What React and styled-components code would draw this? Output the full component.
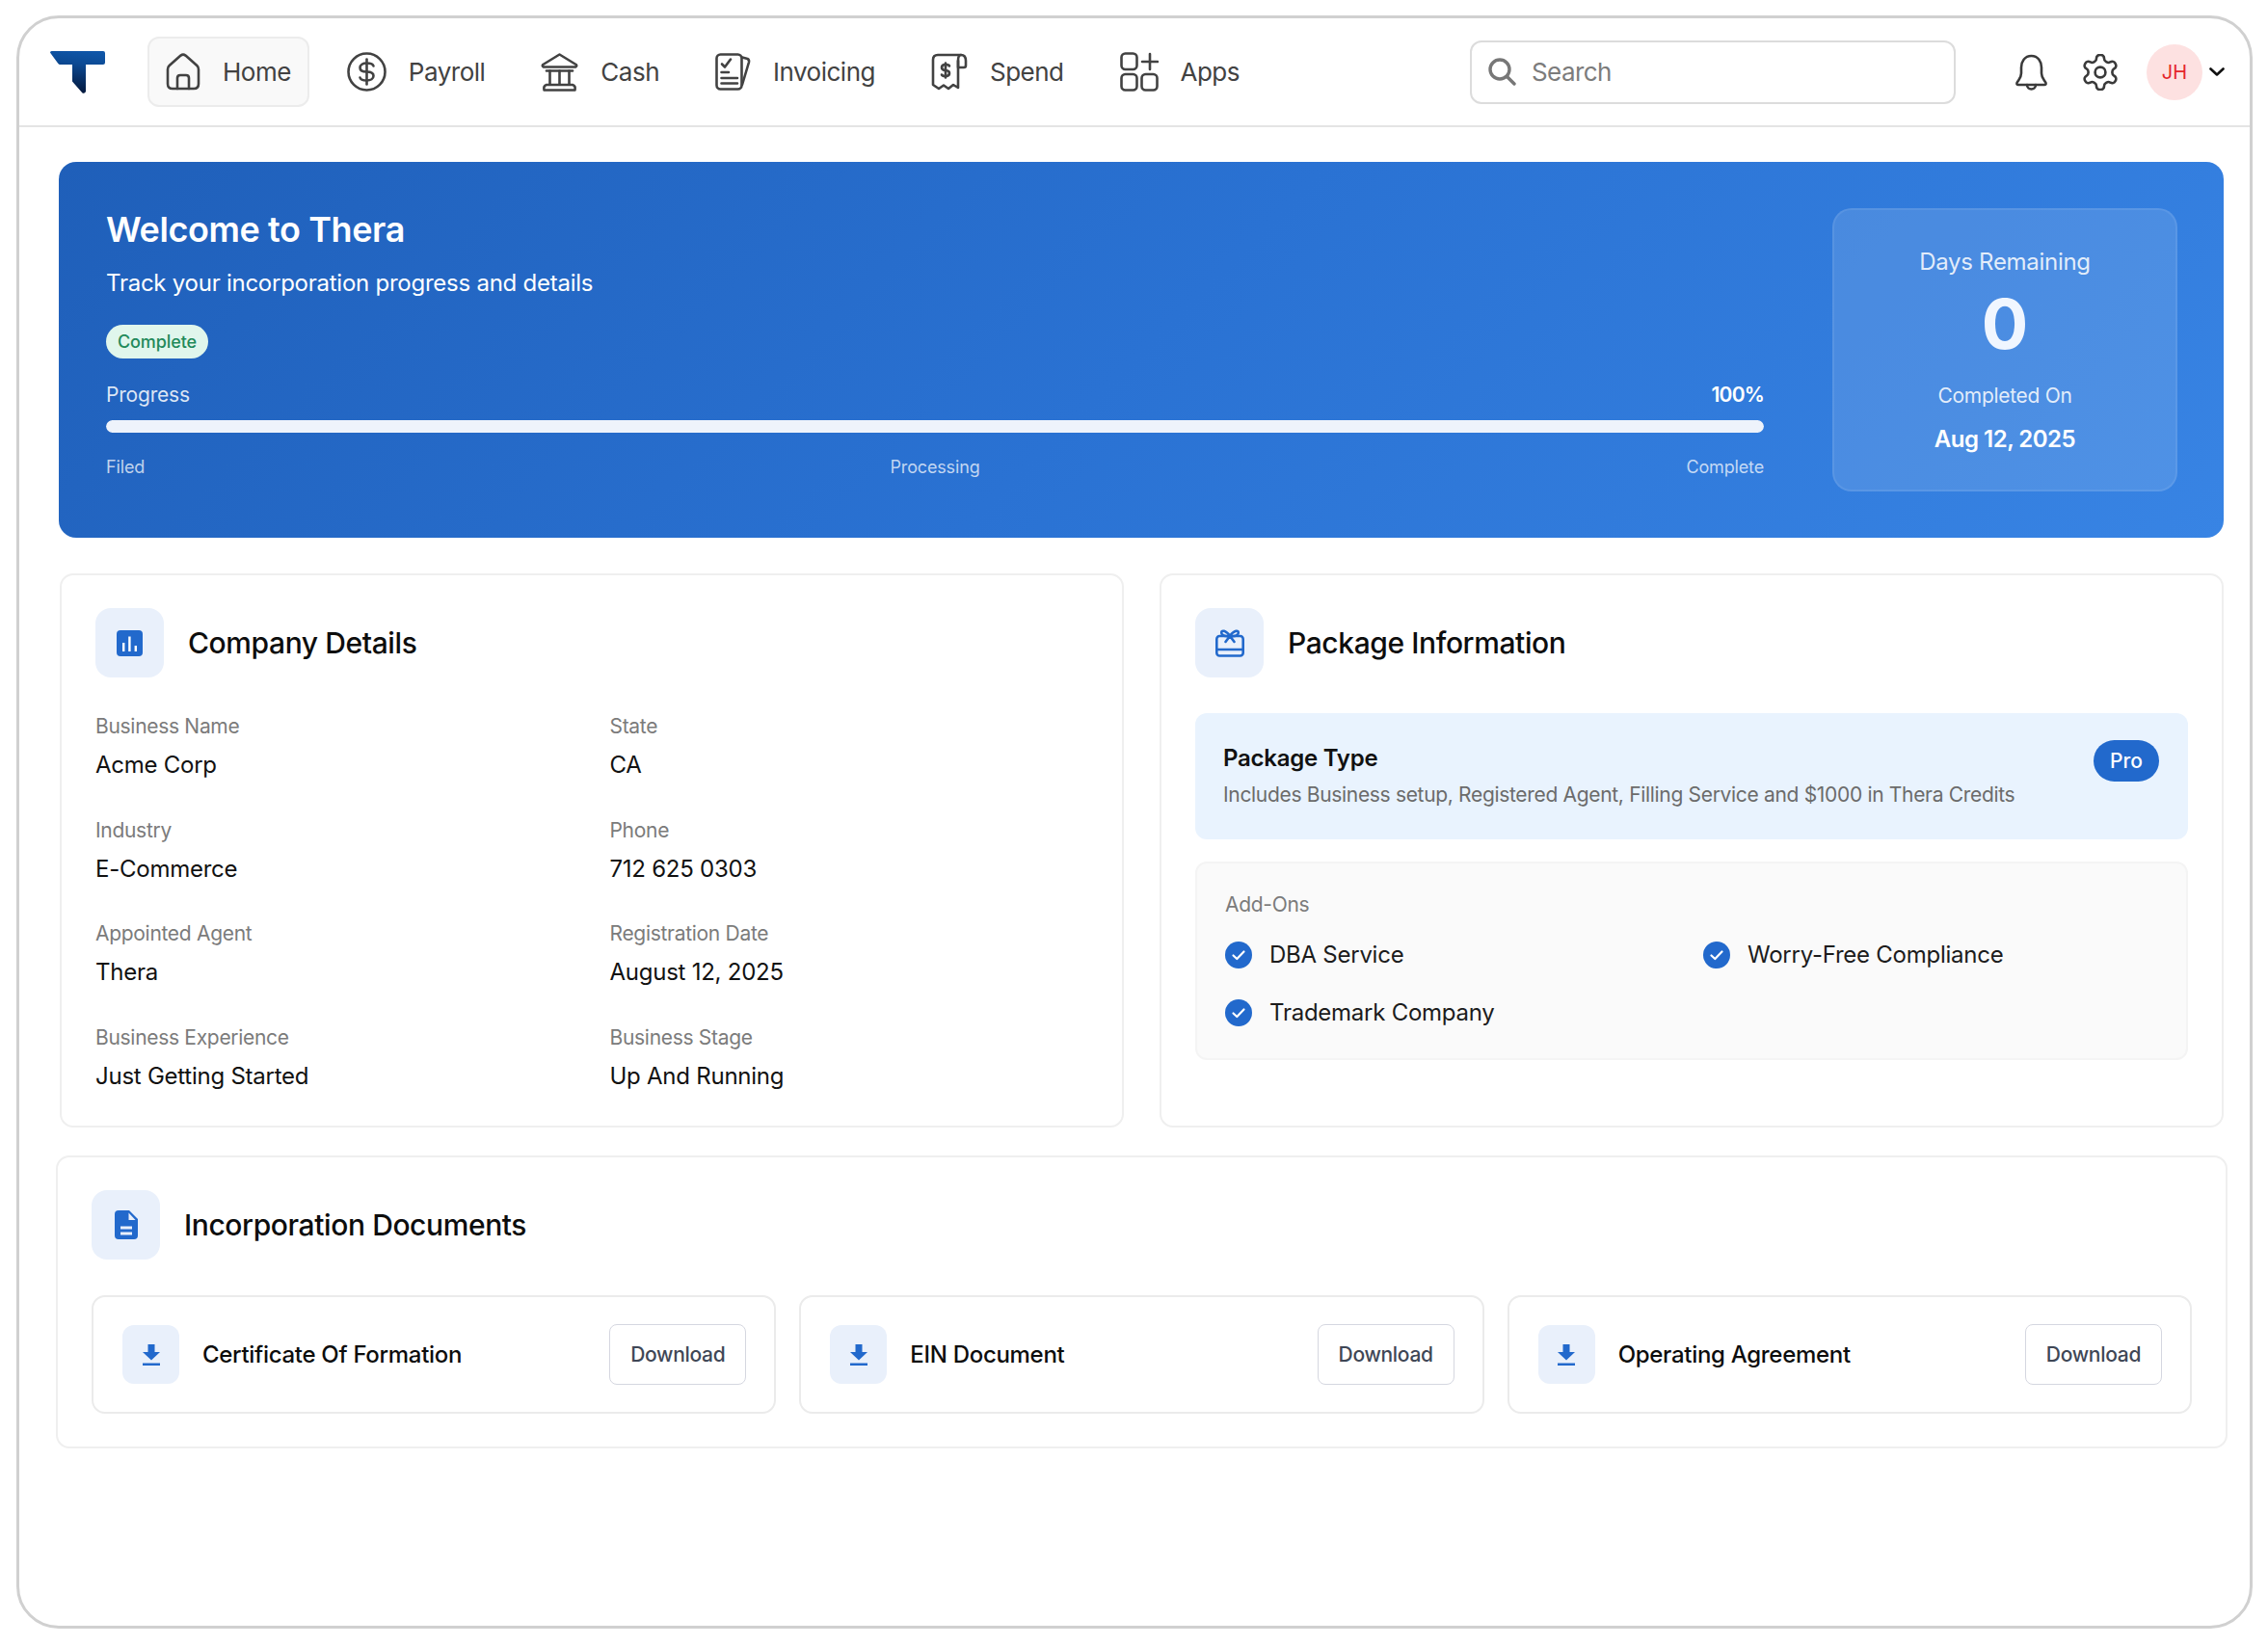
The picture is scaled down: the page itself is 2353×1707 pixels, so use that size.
import React from 'react';
import styled, { createGlobalStyle } from 'styled-components';

const GlobalStyle = createGlobalStyle`
  html, body {
    margin: 0;
    padding: 0;
    background: #fff;
  }
  body {
    font-family: 'Inter', 'Liberation Sans', sans-serif;
    overflow: hidden;
  }
  * {
    box-sizing: border-box;
  }
`;

const BLUE = '#2269cc';
const NAV_INK = '#424242';

const Frame = styled.div`
  width: 2320px;
  height: 1674px;
  margin: 16px 0 0 17px;
  border: 3px solid #d0d0d0;
  border-radius: 44px;
  overflow: hidden;
  background: #fff;
`;

const Header = styled.header`
  height: 113px;
  border-bottom: 2px solid #e4e4e4;
  padding: 0 26px 0 32px;
  display: flex;
  align-items: center;
`;

const Logo = styled.svg`
  width: 57px;
  height: 44px;
  margin-right: 44px;
  flex: none;
`;

const Nav = styled.nav`
  display: flex;
  align-items: center;
  gap: 20px;
`;

const NavItem = styled.a`
  height: 73px;
  padding: 0 17px;
  display: flex;
  align-items: center;
  gap: 23px;
  border-radius: 12px;
  border: 2px solid ${({ $active }) => ($active ? '#ececec' : 'transparent')};
  background: ${({ $active }) => ($active ? '#f9f9f9' : 'transparent')};
  color: ${NAV_INK};
  font-size: 26px;
  line-height: 32px;
  font-weight: 400;
  letter-spacing: -0.5px;
  text-decoration: none;

  svg {
    flex: none;
    fill: none;
    stroke: ${NAV_INK};
    stroke-width: 2.6;
    stroke-linecap: round;
    stroke-linejoin: round;
  }
`;

const Search = styled.div`
  width: 504px;
  height: 66px;
  margin-left: auto;
  padding: 0 17px;
  display: flex;
  align-items: center;
  gap: 16px;
  border: 2px solid #dcdcdc;
  border-radius: 12px;
  color: #7c7c7c;
  font-size: 26px;
  letter-spacing: -0.6px;
`;

const HeaderActions = styled.div`
  margin-left: 61px;
  display: flex;
  align-items: center;
`;

const IconButton = styled.span`
  display: flex;
  margin-right: ${({ $gap }) => $gap}px;

  svg {
    fill: none;
    stroke: #3a3a3a;
    stroke-width: 2.6;
    stroke-linecap: round;
    stroke-linejoin: round;
  }
`;

const Avatar = styled.div`
  width: 58px;
  height: 58px;
  border-radius: 50%;
  background: #fde1e1;
  color: #e5262b;
  font-size: 20px;
  display: flex;
  align-items: center;
  justify-content: center;
`;

const Chevron = styled.svg`
  width: 16px;
  height: 9px;
  margin-left: 7px;
  fill: none;
  stroke: #111;
  stroke-width: 2.6;
  stroke-linecap: round;
  stroke-linejoin: round;
`;

const Main = styled.main`
  padding: 36px 23px 0 38px;
`;

const Hero = styled.section`
  margin: 0 4px 0 3px;
  height: 390px;
  padding: 48px 48px 48px 49px;
  display: flex;
  gap: 71px;
  border-radius: 18px;
  color: #fff;
  background: linear-gradient(135deg, #1f5fb9 0%, #2a72d3 50%, #3884e4 100%);
`;

const HeroBody = styled.div`
  flex: 1;
  min-width: 0;
`;

const HeroTitle = styled.h1`
  margin: 0;
  font-size: 36px;
  line-height: 45px;
  font-weight: 600;
  letter-spacing: -0.4px;
`;

const HeroSub = styled.p`
  margin: 17px 0 0;
  font-size: 24px;
  line-height: 32px;
  letter-spacing: -0.25px;
`;

const StatusPill = styled.span`
  display: inline-flex;
  align-items: center;
  height: 35px;
  margin-top: 27px;
  padding: 0 12px;
  border-radius: 18px;
  background: #e0f6ec;
  color: #1f8a5a;
  font-size: 18px;
  font-weight: 500;
  letter-spacing: -0.1px;
`;

const ProgressHead = styled.div`
  margin-top: 24px;
  display: flex;
  justify-content: space-between;
  font-size: 21px;
  line-height: 28px;
  letter-spacing: -0.2px;
  color: rgba(255, 255, 255, 0.85);

  b {
    color: #fff;
    font-weight: 600;
    letter-spacing: -0.8px;
  }
`;

const Bar = styled.div`
  height: 13px;
  margin-top: 12px;
  border-radius: 7px;
  background: rgba(255, 255, 255, 0.3);
  overflow: hidden;
`;

const BarFill = styled.div`
  height: 100%;
  border-radius: 7px;
  background: #eef3fb;
`;

const Steps = styled.div`
  margin-top: 24px;
  display: grid;
  grid-template-columns: 1fr auto 1fr;
  font-size: 18px;
  line-height: 24px;
  letter-spacing: -0.15px;
  color: rgba(255, 255, 255, 0.72);

  span:last-child {
    justify-self: end;
  }
`;

const StatCard = styled.aside`
  width: 358px;
  flex: none;
  padding-top: 39px;
  display: flex;
  flex-direction: column;
  align-items: center;
  border: 2px solid rgba(255, 255, 255, 0.08);
  border-radius: 20px;
  background: rgba(255, 255, 255, 0.12);
`;

const StatLabel = styled.div`
  margin-top: ${({ $top }) => $top || 0}px;
  font-size: ${({ $size }) => $size}px;
  line-height: 30px;
  letter-spacing: -0.3px;
  color: rgba(255, 255, 255, 0.85);
`;

const StatNumber = styled.div`
  margin-top: 13px;
  font-size: 72px;
  line-height: 72px;
  font-weight: 700;
  color: #f0f6ff;
`;

const StatDate = styled.div`
  margin-top: 14px;
  font-size: 24px;
  line-height: 32px;
  font-weight: 600;
  letter-spacing: -0.5px;
`;

const CardGrid = styled.div`
  margin: 37px 4px 0 4px;
  display: grid;
  grid-template-columns: 1fr 1fr;
  gap: 37px;
`;

const Card = styled.section`
  height: ${({ $height }) => ($height ? `${$height}px` : 'auto')};
  padding: 34px 35px;
  border: 2px solid #efefef;
  border-radius: 14px;
  background: #fff;
`;

const DocsCard = styled(Card)`
  margin-top: 29px;
`;

const CardHead = styled.div`
  display: flex;
  align-items: center;
  gap: 25px;
  margin-bottom: 37px;
`;

const IconTile = styled.div`
  width: 71px;
  height: 72px;
  flex: none;
  border-radius: 16px;
  background: #e9f0fb;
  display: flex;
  align-items: center;
  justify-content: center;
`;

const CardTitle = styled.h2`
  margin: 0;
  font-size: 30px;
  line-height: 38px;
  font-weight: 500;
  letter-spacing: -0.4px;
  color: #0d0d0d;
`;

const Fields = styled.dl`
  margin: 0;
  display: grid;
  grid-template-columns: 1fr 1fr;
  column-gap: 37px;
  row-gap: 37.5px;
`;

const FieldLabel = styled.dt`
  font-size: 21px;
  line-height: 28px;
  letter-spacing: -0.3px;
  color: #7b7b7b;
`;

const FieldValue = styled.dd`
  margin: 10px 0 0;
  font-size: 24px;
  line-height: 32px;
  letter-spacing: -0.25px;
  color: #111;
`;

const PackageType = styled.div`
  height: 131px;
  padding: 27px 30px 0 29px;
  display: flex;
  justify-content: space-between;
  align-items: flex-start;
  border-radius: 12px;
  background: #e9f3fe;
`;

const PackageName = styled.div`
  margin-top: 5px;
  font-size: 24px;
  line-height: 30px;
  font-weight: 600;
  letter-spacing: -0.25px;
  color: #111;
`;

const PackageDesc = styled.div`
  margin-top: 9px;
  font-size: 21px;
  line-height: 28px;
  letter-spacing: -0.32px;
  color: #6b6b6b;
`;

const PlanBadge = styled.span`
  height: 43px;
  margin-top: 1px;
  padding: 0 17px;
  display: flex;
  align-items: center;
  border-radius: 22px;
  background: ${BLUE};
  color: #fff;
  font-size: 21px;
  font-weight: 500;
`;

const AddOnsBox = styled.div`
  height: 206px;
  margin-top: 23px;
  padding: 29px;
  border: 2px solid #f4f4f4;
  border-radius: 12px;
  background: #fafafa;
`;

const AddOnsLabel = styled.div`
  font-size: 21px;
  line-height: 28px;
  letter-spacing: -0.3px;
  color: #7b7b7b;
`;

const AddOnsGrid = styled.div`
  margin-top: 22px;
  display: grid;
  grid-template-columns: 1fr 1fr;
  column-gap: 24px;
  row-gap: 28px;
`;

const AddOn = styled.div`
  display: flex;
  align-items: center;
  gap: 18px;
  font-size: 24px;
  line-height: 32px;
  letter-spacing: -0.25px;
  color: #1c1c1c;
`;

const DocRow = styled.div`
  display: grid;
  grid-template-columns: repeat(3, 1fr);
  gap: 24px;
`;

const DocItem = styled.div`
  height: 123px;
  padding: 0 29px 0 30px;
  display: flex;
  align-items: center;
  gap: 24px;
  border: 2px solid #ebebeb;
  border-radius: 14px;
`;

const DocTile = styled.div`
  width: 59px;
  height: 61px;
  flex: none;
  border-radius: 12px;
  background: #e9f0fb;
  display: flex;
  align-items: center;
  justify-content: center;
`;

const DocName = styled.div`
  flex: 1;
  font-size: 24px;
  font-weight: 500;
  letter-spacing: -0.3px;
  color: #0d0d0d;
`;

const DownloadButton = styled.button`
  width: 142px;
  height: 63px;
  flex: none;
  border: 1.5px solid #d5d7e0;
  border-radius: 8px;
  background: #fff;
  color: #3f4756;
  font-family: inherit;
  font-size: 21px;
  font-weight: 500;
  letter-spacing: -0.3px;
`;

const HomeIcon = () => (
  <svg width="36" height="39" viewBox="0 0 36 39">
    <path d="M2 17Q2 14.6 3.7 13L15.5 2.6Q18 .8 20.5 2.6L32.3 13Q34 14.6 34 17V32Q34 37 29 37H7Q2 37 2 32Z" />
    <path d="M12 37V26Q12 23 15 23H21Q24 23 24 26V37" />
  </svg>
);

const PayrollIcon = () => (
  <svg width="41" height="41" viewBox="0 0 41 41">
    <circle cx="20.5" cy="20.5" r="19" />
    <path d="M27.5 14.5C27 12.5 24 11.5 20.5 11.5C16.5 11.5 13.5 13.3 13.5 16.3C13.5 19.3 16.5 20.5 20.5 20.5C24.5 20.5 27.5 21.7 27.5 24.7C27.5 27.7 24.5 29.5 20.5 29.5C16.5 29.5 14 28.3 13.5 26.5" />
    <path d="M20.5 7.5V33.5" />
  </svg>
);

const CashIcon = () => (
  <svg width="39" height="40" viewBox="0 0 39 40">
    <path d="M19.5 1.5L36.6 12Q38 13.5 36 14.5H3Q1 13.5 2.4 12Z" />
    <path d="M6 18.5H33" />
    <path d="M9.5 18.5V32.5M19.5 18.5V32.5M29.5 18.5V32.5" />
    <path d="M3.5 38.5Q2.5 34 6 33H33Q36.5 34 35.5 38.5Z" />
  </svg>
);

const InvoiceIcon = () => (
  <svg width="37" height="39" viewBox="0 0 37 39">
    <rect x="1.5" y="1.5" width="26" height="36" rx="4" />
    <path d="M28 4.5L33.5 6Q35.5 7 35 9.5L28 33" />
    <path d="M7 11.5L10 14.5L16 6.5" />
    <path d="M6.5 20H14M6.5 26H23M6.5 31.5H23" />
  </svg>
);

const SpendIcon = () => (
  <svg width="38" height="39" viewBox="0 0 38 39">
    <path d="M28 8V36L23 33L18 37L13 33.5L8 37L2 33V7Q2 2 7 2H31" />
    <path d="M31 2Q36 2 36 8V13Q36 15 34 15H28V8Q28 2 31 2" />
    <path d="M19 13.5Q18.5 12 15 12Q11 12 11 15Q11 17.7 15 18Q19 18.3 19 21Q19 24 15 24Q11.5 24 11 22.5" />
    <path d="M15 10.5V25.5" />
  </svg>
);

const AppsIcon = () => (
  <svg width="40" height="41" viewBox="0 0 40 41">
    <rect x="1.5" y="1.5" width="16" height="16.5" rx="4" />
    <path d="M31 2V18M23 10H39" />
    <rect x="1.5" y="23" width="16" height="16.5" rx="4" />
    <rect x="22.5" y="23" width="16" height="16.5" rx="4" />
  </svg>
);

const CheckBadge = () => (
  <svg width="28" height="28" viewBox="0 0 28 28">
    <circle cx="14" cy="14" r="14" fill={BLUE} />
    <path d="M8.5 14.5L12.3 18L19.5 10.5" fill="none" stroke="#fff" strokeWidth="2.2" strokeLinecap="round" strokeLinejoin="round" />
  </svg>
);

const DownloadIcon = () => (
  <svg width="18" height="22" viewBox="0 0 18 22">
    <path d="M5.5 0H12.5V8H18L9 16.5L0 8H5.5Z" fill={BLUE} />
    <rect y="19.5" width="18" height="2.5" fill={BLUE} />
  </svg>
);

const NAV_ITEMS = [
  { label: 'Home', icon: <HomeIcon />, active: true },
  { label: 'Payroll', icon: <PayrollIcon /> },
  { label: 'Cash', icon: <CashIcon /> },
  { label: 'Invoicing', icon: <InvoiceIcon /> },
  { label: 'Spend', icon: <SpendIcon /> },
  { label: 'Apps', icon: <AppsIcon /> },
];

const COMPANY_FIELDS = [
  ['Business Name', 'Acme Corp'],
  ['State', 'CA'],
  ['Industry', 'E-Commerce'],
  ['Phone', '712 625 0303'],
  ['Appointed Agent', 'Thera'],
  ['Registration Date', 'August 12, 2025'],
  ['Business Experience', 'Just Getting Started'],
  ['Business Stage', 'Up And Running'],
];

const ADD_ONS = ['DBA Service', 'Worry-Free Compliance', 'Trademark Company'];
const DOCUMENTS = ['Certificate Of Formation', 'EIN Document', 'Operating Agreement'];

const App = () => (
  <>
    <GlobalStyle />
    <Frame>
      <Header>
        <Logo viewBox="0 0 57 44">
          <defs>
            <linearGradient id="logoFill" x1="0.6" y1="0" x2="0.45" y2="1">
              <stop offset="0" stopColor="#0f56a8" />
              <stop offset="0.3" stopColor="#0c4a94" />
              <stop offset="1" stopColor="#04173a" />
            </linearGradient>
          </defs>
          <path
            d="M1.5 0H55Q57 0 57 2V12Q57 14 55 14H37V42Q36 44.5 33.5 43.5L23 31.5V14H10.5Q9 14 8 12.5L.3 2Q-.5 .3 1.5 0Z"
            fill="url(#logoFill)"
          />
        </Logo>
        <Nav>
          {NAV_ITEMS.map(({ label, icon, active }) => (
            <NavItem key={label} $active={active}>
              {icon}
              {label}
            </NavItem>
          ))}
        </Nav>
        <Search>
          <svg width="29" height="29" viewBox="0 0 29 29" fill="none" stroke="#777" strokeWidth="3.4" strokeLinecap="round">
            <circle cx="12" cy="12" r="10" />
            <path d="M19.5 19.5L27 27" />
          </svg>
          Search
        </Search>
        <HeaderActions>
          <IconButton $gap={35}>
            <svg width="35" height="38" viewBox="0 0 35 38">
              <path d="M17.5 2C10.5 2 7 8 7 14V20C7 25 4 27 2.5 30Q2 32 4 32H31Q33 32 32.5 30C31 27 28 25 28 20V14C28 8 24.5 2 17.5 2Z" />
              <path d="M13 32C13 38 22 38 22 32" />
            </svg>
          </IconButton>
          <IconButton $gap={29}>
            <svg width="38" height="38" viewBox="1.5 1.5 21 21" style={{ strokeWidth: 1.45 }}>
              <path d="M12.22 2h-.44a2 2 0 0 0-2 2v.18a2 2 0 0 1-1 1.73l-.43.25a2 2 0 0 1-2 0l-.15-.08a2 2 0 0 0-2.73.73l-.22.38a2 2 0 0 0 .73 2.73l.15.1a2 2 0 0 1 1 1.72v.51a2 2 0 0 1-1 1.74l-.15.09a2 2 0 0 0-.73 2.73l.22.38a2 2 0 0 0 2.73.73l.15-.08a2 2 0 0 1 2 0l.43.25a2 2 0 0 1 1 1.73V20a2 2 0 0 0 2 2h.44a2 2 0 0 0 2-2v-.18a2 2 0 0 1 1-1.73l.43-.25a2 2 0 0 1 2 0l.15.08a2 2 0 0 0 2.73-.73l.22-.39a2 2 0 0 0-.73-2.73l-.15-.08a2 2 0 0 1-1-1.74v-.5a2 2 0 0 1 1-1.74l.15-.09a2 2 0 0 0 .73-2.73l-.22-.38a2 2 0 0 0-2.73-.73l-.15.08a2 2 0 0 1-2 0l-.43-.25a2 2 0 0 1-1-1.73V4a2 2 0 0 0-2-2z" />
              <circle cx="12" cy="12" r="3" />
            </svg>
          </IconButton>
          <Avatar>JH</Avatar>
          <Chevron viewBox="0 0 16 9">
            <path d="M1.5 1.5L8 7.5L14.5 1.5" />
          </Chevron>
        </HeaderActions>
      </Header>

      <Main>
        <Hero>
          <HeroBody>
            <HeroTitle>Welcome to Thera</HeroTitle>
            <HeroSub>Track your incorporation progress and details</HeroSub>
            <StatusPill>Complete</StatusPill>
            <ProgressHead>
              <span>Progress</span>
              <b>100%</b>
            </ProgressHead>
            <Bar>
              <BarFill style={{ width: '100%' }} />
            </Bar>
            <Steps>
              <span>Filed</span>
              <span>Processing</span>
              <span>Complete</span>
            </Steps>
          </HeroBody>
          <StatCard>
            <StatLabel $size={24}>Days Remaining</StatLabel>
            <StatNumber>0</StatNumber>
            <StatLabel $size={21} $top={24}>Completed On</StatLabel>
            <StatDate>Aug 12, 2025</StatDate>
          </StatCard>
        </Hero>

        <CardGrid>
          <Card $height={575}>
            <CardHead>
              <IconTile>
                <svg width="27" height="27" viewBox="0 0 27 27">
                  <rect width="27" height="27" rx="4" fill={BLUE} />
                  <path d="M6 13H8.4V22H6ZM12.2 6.5H14.6V22H12.2ZM18.6 16H21V22H18.6Z" fill="#fff" />
                </svg>
              </IconTile>
              <CardTitle>Company Details</CardTitle>
            </CardHead>
            <Fields>
              {COMPANY_FIELDS.map(([label, value]) => (
                <div key={label}>
                  <FieldLabel>{label}</FieldLabel>
                  <FieldValue>{value}</FieldValue>
                </div>
              ))}
            </Fields>
          </Card>

          <Card $height={575}>
            <CardHead>
              <IconTile>
                <svg width="30" height="29" viewBox="0 0 30 29" fill="none" stroke={BLUE} strokeWidth="2.6" strokeLinecap="round" strokeLinejoin="round">
                  <rect x="1.3" y="7" width="27.4" height="20.5" rx="3" />
                  <path d="M2 21H28" />
                  <path d="M15 7C11 1 5 0 6.5 4.5C7.5 7 11 7.5 15 7C19 1 25 0 23.5 4.5C22.5 7 19 7.5 15 7" />
                  <path d="M15 7L10.5 13M15 7L19.5 13" />
                </svg>
              </IconTile>
              <CardTitle>Package Information</CardTitle>
            </CardHead>
            <PackageType>
              <div>
                <PackageName>Package Type</PackageName>
                <PackageDesc>Includes Business setup, Registered Agent, Filling Service and $1000 in Thera Credits</PackageDesc>
              </div>
              <PlanBadge>Pro</PlanBadge>
            </PackageType>
            <AddOnsBox>
              <AddOnsLabel>Add-Ons</AddOnsLabel>
              <AddOnsGrid>
                {ADD_ONS.map((name) => (
                  <AddOn key={name}>
                    <CheckBadge />
                    {name}
                  </AddOn>
                ))}
              </AddOnsGrid>
            </AddOnsBox>
          </Card>
        </CardGrid>

        <DocsCard $height={304}>
          <CardHead>
            <IconTile>
              <svg width="24" height="30" viewBox="0 0 24 30">
                <path d="M4 0H15L24 9V26Q24 30 20 30H4Q0 30 0 26V4Q0 0 4 0Z" fill={BLUE} />
                <path d="M14.5 2.5L21.5 10H14.5Z" fill="#e9f0fb" />
                <path d="M6 16.5H18V19.5H6ZM6 22.5H18V25.5H6Z" fill="#e9f0fb" />
              </svg>
            </IconTile>
            <CardTitle>Incorporation Documents</CardTitle>
          </CardHead>
          <DocRow>
            {DOCUMENTS.map((name) => (
              <DocItem key={name}>
                <DocTile>
                  <DownloadIcon />
                </DocTile>
                <DocName>{name}</DocName>
                <DownloadButton>Download</DownloadButton>
              </DocItem>
            ))}
          </DocRow>
        </DocsCard>
      </Main>
    </Frame>
  </>
);

export default App;
